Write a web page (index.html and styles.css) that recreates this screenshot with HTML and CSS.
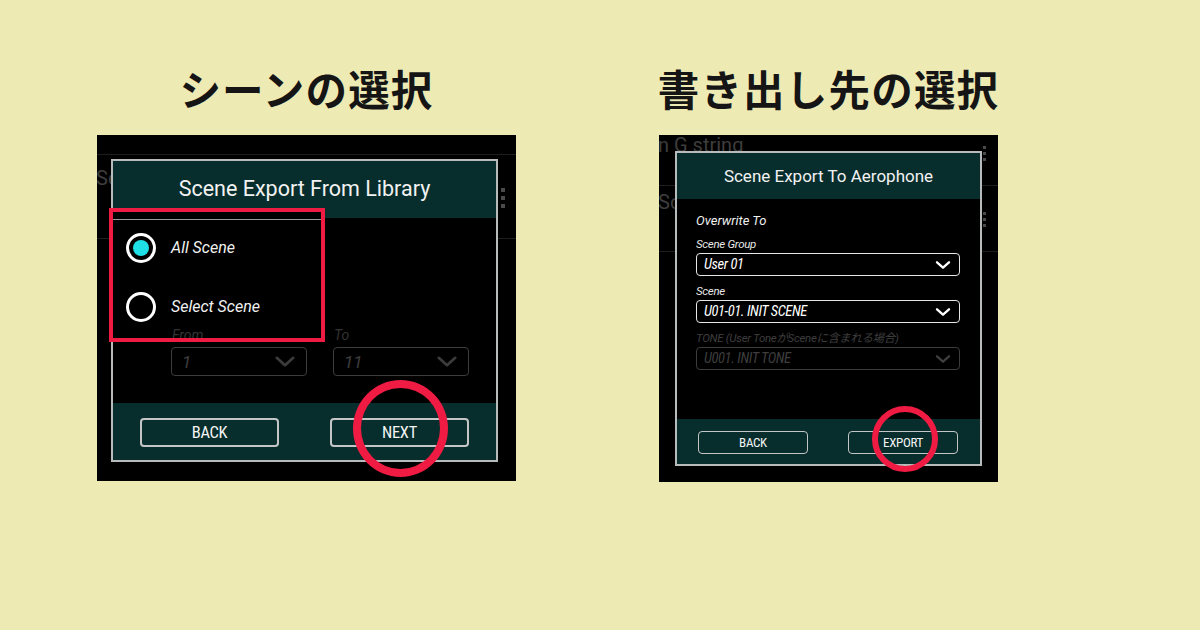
FILE: index.html
```html
<!DOCTYPE html>
<html lang="ja">
<head>
<meta charset="utf-8">
<title>シーンのエクスポート</title>
<link rel="stylesheet" href="styles.css">
</head>
<body>
<main class="page">
  <section class="col col-lib">
    <h2 class="title">シーンの選択</h2>
    <div class="screen screen-lib">
      <div class="bg-list">
        <div class="bg-row bg-row-cut"></div>
        <div class="bg-row bg-row-lib"><span class="bg-name">Scene 2</span><span class="kebab"><i></i><i></i><i></i></span></div>
      </div>

      <div class="dialog dialog-lib">
        <div class="dlg-head">Scene Export From Library</div>
        <div class="dlg-body">
          <div class="radio-row"><span class="radio is-on"></span><span class="radio-label">All Scene</span></div>
          <div class="radio-row"><span class="radio"></span><span class="radio-label">Select Scene</span></div>
          <div class="range">
            <div class="range-field">
              <div class="range-label">From</div>
              <div class="select select-off"><span>1</span>
                <svg class="chev" viewBox="0 0 24 14"><polyline points="3,3 12,11 21,3"/></svg></div>
            </div>
            <div class="range-field">
              <div class="range-label">To</div>
              <div class="select select-off"><span>11</span>
                <svg class="chev" viewBox="0 0 24 14"><polyline points="3,3 12,11 21,3"/></svg></div>
            </div>
          </div>
        </div>
        <div class="dlg-foot">
          <button class="btn">BACK</button>
          <button class="btn">NEXT</button>
        </div>
      </div>

      <div class="mark-rect"></div>
      <div class="mark-ring ring-next"></div>
    </div>
  </section>

  <section class="col col-dev">
    <h2 class="title">書き出し先の選択</h2>
    <div class="screen screen-dev">
      <div class="bg-list">
        <div class="bg-row bg-row-dev1"><span class="bg-name">n G string</span><span class="kebab"><i></i><i></i><i></i></span></div>
        <div class="bg-row bg-row-dev2"><span class="bg-name">Sc</span><span class="kebab"><i></i><i></i><i></i></span></div>
      </div>

      <div class="dialog dialog-dev">
        <div class="dlg-head">Scene Export To Aerophone</div>
        <div class="dlg-body">
          <div class="dev-heading">Overwrite To</div>
          <div class="dev-field">
            <div class="dev-label">Scene Group</div>
            <div class="select select-dev"><span>User 01</span>
              <svg class="chev" viewBox="0 0 24 14"><polyline points="3,3 12,11 21,3"/></svg></div>
          </div>
          <div class="dev-field">
            <div class="dev-label">Scene</div>
            <div class="select select-dev"><span>U01-01. INIT SCENE</span>
              <svg class="chev" viewBox="0 0 24 14"><polyline points="3,3 12,11 21,3"/></svg></div>
          </div>
          <div class="dev-field">
            <div class="dev-label dev-label-off">TONE (User ToneがSceneに含まれる場合)</div>
            <div class="select select-dev select-off"><span>U001. INIT TONE</span>
              <svg class="chev" viewBox="0 0 24 14"><polyline points="3,3 12,11 21,3"/></svg></div>
          </div>
        </div>
        <div class="dlg-foot">
          <button class="btn">BACK</button>
          <button class="btn">EXPORT</button>
        </div>
      </div>

      <div class="mark-ring ring-export"></div>
    </div>
  </section>
</main>
</body>
</html>
```

FILE: styles.css
```css
* { box-sizing: border-box; }

html, body {
  margin: 0;
  height: 100%;
}

body {
  background: #eeeab4;
  font-family: Roboto, "Noto Sans CJK JP", sans-serif;
  color: #fff;
}

.page {
  display: flex;
  align-items: flex-start;
  padding: 63px 0 0 97px;
  gap: 143px;
}

.col {
  display: flex;
  flex-direction: column;
  align-items: center;
}

.col-lib { width: 419px; }
.col-dev { width: 339px; }

.title {
  margin: 0 0 22px;
  height: 50px;
  line-height: 50px;
  font-family: "Noto Sans CJK JP", sans-serif;
  font-weight: 700;
  font-size: 41.5px;
  color: #151515;
  letter-spacing: 1.2px;
  white-space: nowrap;
}

/* phone screen */
.screen {
  position: relative;
  width: 100%;
  background: #000;
  overflow: hidden;
}
.screen-lib { height: 346px; }
.screen-dev { height: 347px; }

/* list that sits behind the dialog */
.bg-list { display: flex; flex-direction: column; }

.bg-row {
  display: flex;
  justify-content: space-between;
  align-items: flex-start;
  border-bottom: 1px solid #1e1e1e;
}
.bg-row-cut { height: 20px; }
.bg-row-lib { height: 84px; padding: 11px 11px 0 0; }
.bg-row-dev1 { height: 51px; padding: 0 12px 0 0; }
.bg-row-dev2 { height: 66px; padding: 4px 12px 0 0; }

.bg-name {
  font-size: 20px;
  line-height: 24px;
  color: #3d3d3d;
  white-space: nowrap;
  margin-left: -1px;
}
.bg-row-dev1 .bg-name { line-height: 20px; }

.kebab {
  display: flex;
  flex-direction: column;
  gap: 4px;
  margin-top: 22px;
}
.kebab i {
  display: block;
  width: 4px;
  height: 4px;
  background: #4a4a4a;
}
.bg-row-dev1 .kebab { margin-top: 11px; gap: 3px; }
.bg-row-dev2 .kebab { margin-top: 22px; gap: 3px; }
.bg-row-dev1 .kebab i,
.bg-row-dev2 .kebab i { width: 3px; height: 3px; }

/* modal dialog */
.dialog {
  position: absolute;
  display: flex;
  flex-direction: column;
  border: 2px solid #b8bbbb;
  background: #000;
}
.dialog-lib { left: 14px; top: 24px; width: 387px; height: 303px; }
.dialog-dev { left: 16px; top: 16px; width: 307px; height: 315px; }

.dlg-head {
  background: #072e2c;
  display: flex;
  align-items: center;
  justify-content: center;
  color: #f2f2f2;
  white-space: nowrap;
}
.dialog-lib .dlg-head { height: 57px; font-size: 21.5px; padding-bottom: 2px; }
.dialog-dev .dlg-head { height: 46px; font-size: 17px; }

.dlg-body { flex: 1; }

.dlg-foot {
  background: #072e2c;
  display: flex;
  justify-content: space-between;
  align-items: flex-start;
}
.dialog-lib .dlg-foot { height: 57px; padding: 15px 27px 0; }
.dialog-dev .dlg-foot { height: 45px; padding: 12px 22px 0 21px; }

.btn {
  font-family: "Roboto Condensed", Roboto, sans-serif;
  background: transparent;
  color: #f4f4f4;
  border: 2px solid #c4c6c6;
  border-radius: 4px;
  padding: 0;
  display: flex;
  align-items: center;
  justify-content: center;
  letter-spacing: -0.3px;
}
.dialog-lib .btn { width: 139px; height: 29px; font-size: 16.5px; }
.dialog-dev .btn { width: 110px; height: 23px; font-size: 13px; border-width: 1.5px; }

/* library dialog: radio choices */
.radio-row {
  height: 59px;
  display: flex;
  align-items: center;
  gap: 15px;
  padding-left: 13px;
}
.radio {
  width: 30px;
  height: 30px;
  border-radius: 50%;
  border: 3px solid #fff;
  display: flex;
  align-items: center;
  justify-content: center;
}
.radio.is-on::after {
  content: "";
  width: 16px;
  height: 16px;
  border-radius: 50%;
  background: #1fe0e6;
}
.radio-label {
  font-style: italic;
  font-size: 16px;
  color: #f2f2f2;
}

.range {
  display: flex;
  gap: 26px;
  margin: -10px 0 0 58px;
}
.range-field { width: 136px; }
.range-label {
  font-style: italic;
  font-size: 14px;
  line-height: 18px;
  color: #333;
  margin-bottom: 3px;
  padding-left: 1px;
}

.select {
  display: flex;
  align-items: center;
  justify-content: space-between;
  border: 1.5px solid #e6e6e6;
  border-radius: 4px;
  font-style: italic;
  color: #fff;
}
.select.select-off {
  border-color: #3c3c3c;
  color: #3e3e3e;
}
.range .select {
  height: 29px;
  padding: 0 10px 0 10px;
  font-size: 17px;
}
.chev {
  fill: none;
  stroke: #fff;
  stroke-width: 3;
  stroke-linecap: round;
  stroke-linejoin: round;
}
.range .chev { width: 22px; height: 13px; stroke: #3c3c3c; }

/* device dialog: destination fields */
.dialog-dev .dlg-body { padding: 13px 20px 0 19px; }
.dev-heading {
  font-style: italic;
  font-size: 13px;
  line-height: 18px;
  color: #f0f0f0;
}
.dev-field { margin-top: 7px; }
.dev-field + .dev-field { margin-top: 8px; }
.dev-label {
  font-style: italic;
  font-size: 11.5px;
  line-height: 14px;
  color: #e8e8e8;
  margin-bottom: 2px;
  letter-spacing: -0.3px;
  white-space: nowrap;
}
.dev-label-off { color: #3e3e3e; }
.select-dev {
  height: 23px;
  padding: 0 8px 0 7px;
  font-family: "Roboto Condensed", Roboto, sans-serif;
  font-size: 14.5px;
  letter-spacing: -0.4px;
}
.dev-field:first-of-type .select-dev { height: 22px; }
.select-dev .chev { width: 16px; height: 10px; stroke-width: 3.5; }
.select-dev.select-off .chev { stroke: #3e3e3e; }

/* red annotations drawn over the screens */
.mark-rect {
  position: absolute;
  left: 12px;
  top: 73px;
  width: 216px;
  height: 134px;
  border: 4px solid #ef1b43;
}
.mark-rect::before {
  content: "";
  position: absolute;
  left: 0;
  right: 0;
  top: 0;
  height: 7px;
  background: #000;
  border-bottom: 1px solid #9a9a9a;
}

.mark-ring {
  position: absolute;
  border-radius: 50%;
  border-style: solid;
  border-color: #ef1b43;
}
.ring-next {
  left: 256px;
  top: 245px;
  width: 95px;
  height: 97px;
  border-width: 8px;
}
.ring-export {
  left: 213px;
  top: 271px;
  width: 66px;
  height: 66px;
  border-width: 6px;
}
```
